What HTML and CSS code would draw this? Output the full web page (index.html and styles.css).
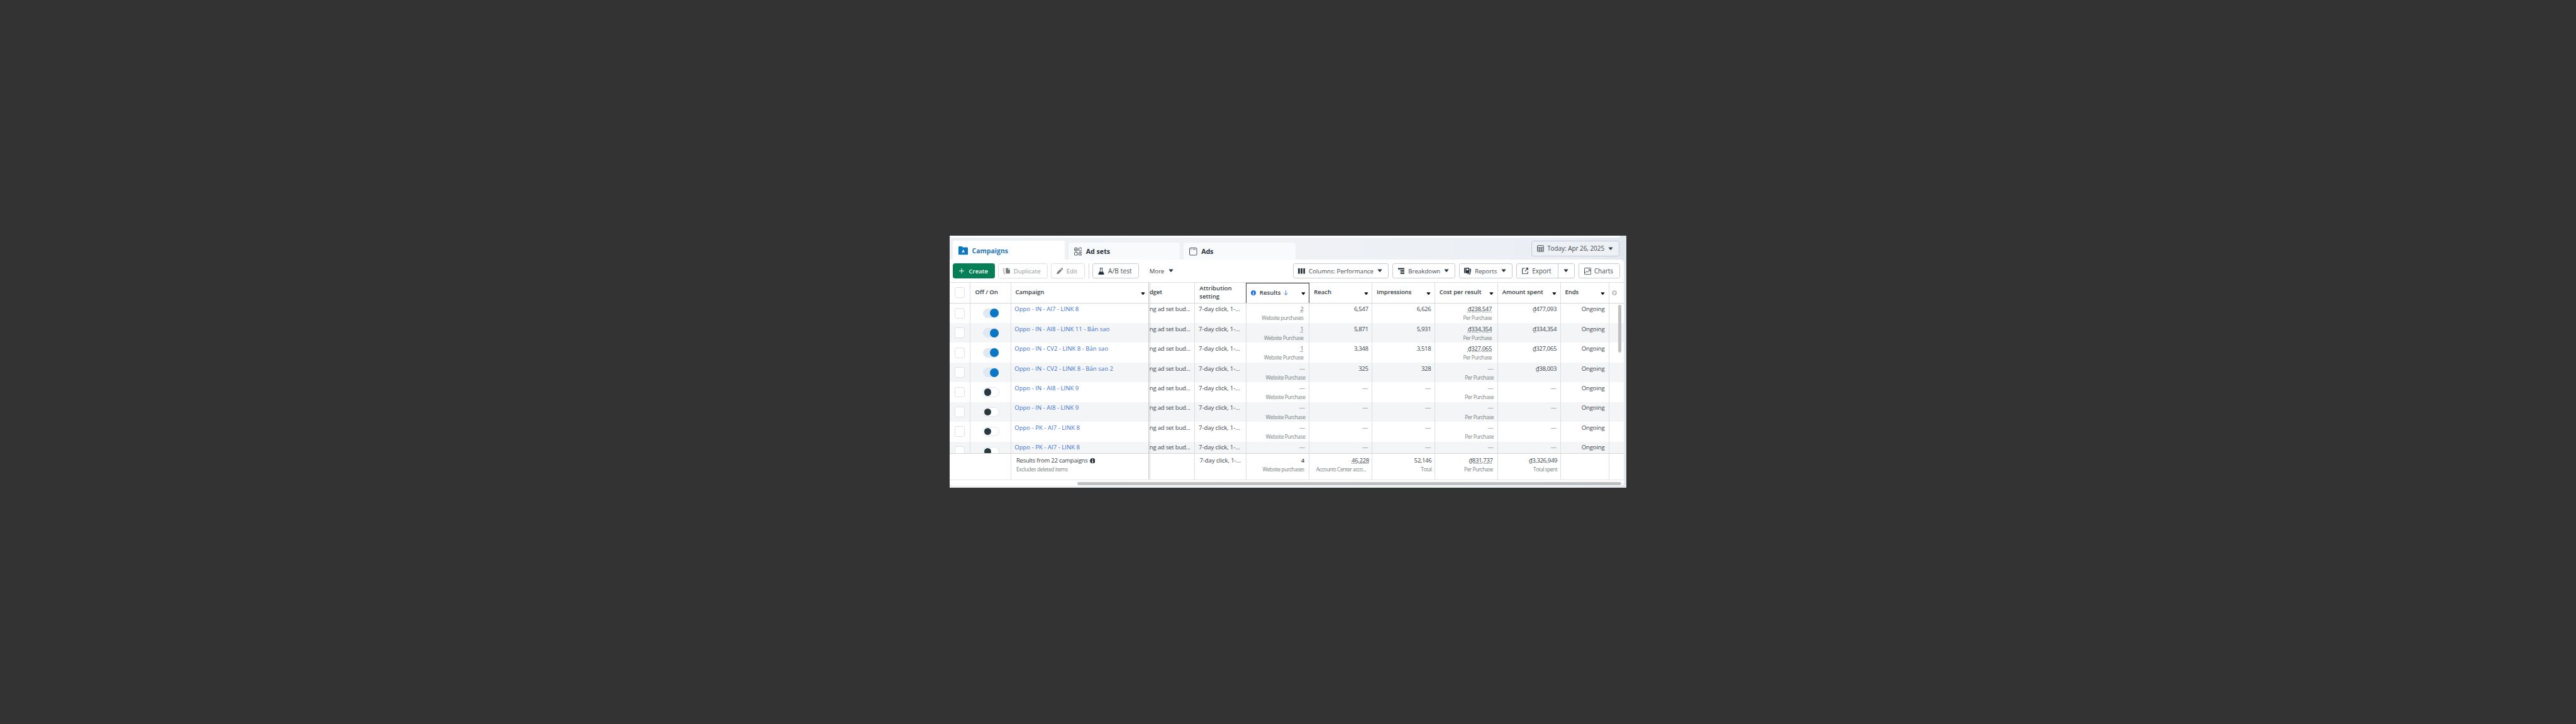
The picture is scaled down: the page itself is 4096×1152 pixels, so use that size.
FILE: index.html
```html
<!DOCTYPE html>
<html lang="en">
<head>
<meta charset="utf-8">
<title>Campaigns</title>
<link rel="stylesheet" href="styles.css">
</head>
<body>
<svg class="sprite" aria-hidden="true">
  <symbol id="caret" viewBox="0 0 10 7"><path d="M1.3.5h7.4q1.100 0 .4.900L5.700 5.700q-.7.800-1.400 0L.9 1.400Q.2.500 1.300.500z"/></symbol>
  <symbol id="folder" viewBox="0 0 19 17"><path d="M1.500 0h5q.8 0 1.200.7l.9 1.300h8.400q2 0 2 2v11q0 2-2 2H2q-2 0-2-2V1.500Q0 0 1.500 0z"/><path fill="#fff" d="M9.500 6l3.300 7-3.300-1.600L6.200 13z"/></symbol>
  <symbol id="grid" viewBox="0 0 16 16"><g fill="none" stroke="currentColor" stroke-width="1.200"><rect x=".7" y=".7" width="5.800" height="5.800" rx="1.200"/><rect x="9.300" y=".7" width="5.800" height="5.800" rx="1.200"/><rect x=".7" y="9.300" width="5.800" height="5.800" rx="1.200"/><rect x="9.300" y="9.300" width="5.800" height="5.800" rx="1.200"/></g><path d="M2.600 2.600h2v2h-2zM11.200 11.200h2v2h-2z"/></symbol>
  <symbol id="window" viewBox="0 0 16 16"><rect x=".7" y=".7" width="14.400" height="14.400" rx="1.800" fill="none" stroke="currentColor" stroke-width="1.200"/><path d="M3 3h1.400v1.400H3zM7 3.200h6v1H7z"/></symbol>
  <symbol id="plus" viewBox="0 0 10 10"><path d="M4.400 0h1.200v4.400H10v1.200H5.600V10H4.400V5.600H0V4.400h4.400z"/></symbol>
  <symbol id="copy" viewBox="0 0 14 13"><path d="M6.500 0H10v3.500h3.600V10q0 1.200-1.200 1.200H6.500Q5.300 11.200 5.300 10V1.200Q5.300 0 6.500 0zM10.800 0l2.800 2.700h-2.800z"/><path d="M3 .8Q.7 1 .9 3l.8 7q.2 1.800 2 2.100" fill="none" stroke="currentColor" stroke-width="1.200"/></symbol>
  <symbol id="pencil" viewBox="0 0 13 13"><path d="M0 13l.9-3.700 6.900-6.900 2.800 2.800-6.900 6.900zM8.600 1.600L9.700.5q.8-.8 1.600 0l1.200 1.200q.8.800 0 1.600l-1.100 1.100z"/></symbol>
  <symbol id="flask" viewBox="0 0 12 13"><path d="M3.300.6h5.400M4.300.8v4.400L1 11.200q-.4 1.200.8 1.200h8.400q1.200 0 .8-1.200L7.700 5.200V.8" fill="none" stroke="currentColor" stroke-width="1.100"/><path d="M3.300 7.200h5.400l2.500 4.300q.2 1-.8 1H1.600q-1 0-.8-1z"/></symbol>
  <symbol id="cols" viewBox="0 0 14 11"><path d="M0 0h3.600v11H0zM5.200 0h3.600v11H5.200zM10.400 0H14v11h-3.600z"/></symbol>
  <symbol id="tree" viewBox="0 0 13 12"><path d="M0 0h12.500v2.800H0zM4.800 4.400h7.700v2.800H4.800zM4.800 8.800h7.700v2.800H4.800zM2.800 2.800h1v7.800h1.500V9.600H3.800V6.300h1.500V5.300H3.800V2.800z"/></symbol>
  <symbol id="book" viewBox="0 0 14 14"><path d="M0 1.500Q0 0 1.300 0H2v11H1.300Q0 11 0 9.500zM2.800 0h6.500q1.200 0 1.200 1.200v8.600q0 1.200-1.200 1.200H2.800z"/><path fill="#fff" d="M4.500 2h4v3h-4z"/><path d="M11.500 1.800l2 .6q.5.200.4.900l-1.400 9.200q-.2 1-1.200.9L5 12l6.500-.4z"/></symbol>
  <symbol id="export" viewBox="0 0 13 13"><path d="M5.500 1.300H2.200Q.8 1.300.8 2.700v8q0 1.400 1.400 1.400h8q1.400 0 1.400-1.400V7.500M7.800.8h4.400v4.400M12 1L6 7" fill="none" stroke="currentColor" stroke-width="1.300"/></symbol>
  <symbol id="chart" viewBox="0 0 14 14"><rect x=".6" y=".6" width="12.800" height="12.800" rx="1.200" fill="none" stroke="currentColor" stroke-width="1.100"/><path d="M1.500 10.500l3.300-3.700 2.200 2 4.300-4.600M8.500 3.800h3v3" fill="none" stroke="currentColor" stroke-width="1.100"/></symbol>
  <symbol id="calendar" viewBox="0 0 14 14"><rect x=".6" y=".6" width="12.800" height="12.800" rx="2" fill="none" stroke="currentColor" stroke-width="1.100"/><path d="M.6 4.300h12.800M.6 7.400h12.800M.6 10.400h12.800M5 4.300v9M9.300 4.300v9" fill="none" stroke="currentColor"/></symbol>
  <symbol id="info" viewBox="0 0 10 10"><circle cx="5" cy="5" r="5"/><path fill="#fff" d="M4.300 1.800h1.500v1.400H4.300zM3.800 4h2v3.200h.6v.9H3.600v-.9h.7V4.900h-.5z"/></symbol>
  <symbol id="down" viewBox="0 0 9 10"><path d="M4.500 0v9M.8 5.500l3.700 3.700 3.700-3.700" fill="none" stroke="currentColor" stroke-width="1.200"/></symbol>
  <symbol id="add" viewBox="0 0 10 10"><circle cx="5" cy="5" r="5"/><path fill="#fff" d="M4.300 2.300h1.400v2h2v1.400h-2v2H4.300v-2h-2V4.300h2z"/></symbol>
</svg>

<main class="panel">
  <div class="topstrip"></div>
  <header class="tabs">
    <div class="tab active"><svg class="i-folder"><use href="#folder"/></svg><span>Campaigns</span></div>
    <div class="tab"><svg class="i-tab"><use href="#grid"/></svg><span>Ad sets</span></div>
    <div class="tab"><svg class="i-tab"><use href="#window"/></svg><span>Ads</span></div>
    <div class="btn date"><svg class="i14"><use href="#calendar"/></svg><span>Today: Apr 26, 2025</span><svg class="caret"><use href="#caret"/></svg></div>
  </header>

  <section class="content">
    <div class="toolbar">
      <div class="btn create"><svg class="i10"><use href="#plus"/></svg><span>Create</span></div>
      <div class="btn duplicate muted"><svg class="i14"><use href="#copy"/></svg><span>Duplicate</span></div>
      <div class="btn edit muted"><svg class="i13"><use href="#pencil"/></svg><span>Edit</span></div>
      <div class="sep"></div>
      <div class="btn ab"><svg class="i-flask"><use href="#flask"/></svg><span>A/B test</span></div>
      <div class="more"><span>More</span><svg class="caret"><use href="#caret"/></svg></div>
      <div class="btn columns"><svg class="i-cols"><use href="#cols"/></svg><span>Columns: Performance</span><svg class="caret"><use href="#caret"/></svg></div>
      <div class="btn breakdown"><svg class="i13"><use href="#tree"/></svg><span>Breakdown</span><svg class="caret"><use href="#caret"/></svg></div>
      <div class="btn reports"><svg class="i14"><use href="#book"/></svg><span>Reports</span><svg class="caret"><use href="#caret"/></svg></div>
      <div class="btn export"><svg class="i13"><use href="#export"/></svg><span>Export</span><div class="drop"><svg class="caret"><use href="#caret"/></svg></div></div>
      <div class="btn charts"><svg class="i14"><use href="#chart"/></svg><span>Charts</span></div>
    </div>

    <div class="table">
      <div class="row head">
        <div class="c check"><i class="box"></i></div>
        <div class="c onoff">Off / On</div>
        <div class="c name">Campaign<svg class="caret"><use href="#caret"/></svg></div>
        <div class="c budget">dget</div>
        <div class="c attr">Attribution<br>setting</div>
        <div class="c sorted"><svg class="i10 blue"><use href="#info"/></svg><span>Results</span><svg class="i-down"><use href="#down"/></svg><svg class="caret"><use href="#caret"/></svg></div>
        <div class="c">Reach<svg class="caret"><use href="#caret"/></svg></div>
        <div class="c">Impressions<svg class="caret"><use href="#caret"/></svg></div>
        <div class="c">Cost per result<svg class="caret"><use href="#caret"/></svg></div>
        <div class="c">Amount spent<svg class="caret"><use href="#caret"/></svg></div>
        <div class="c">Ends<svg class="caret"><use href="#caret"/></svg></div>
        <div class="c plus"><svg class="i10"><use href="#add"/></svg></div>
      </div>

      <div class="rows">
        <div class="row">
          <div class="c check"><i class="box"></i></div><div class="c switch"><i class="toggle on"></i></div>
          <div class="c name"><a>Oppo - IN - AI7 - LINK 8</a></div><div class="c budget">ng ad set bud...</div><div class="c attr">7-day click, 1-...</div>
          <div class="c num"><u class="soft">2</u><small class="web">Website purchases</small></div><div class="c num">6,547</div><div class="c num">6,626</div>
          <div class="c num"><u>₫238,547</u><small>Per Purchase</small></div><div class="c num">₫477,093</div><div class="c ends">Ongoing</div><div class="c"></div>
        </div>
        <div class="row">
          <div class="c check"><i class="box"></i></div><div class="c switch"><i class="toggle on"></i></div>
          <div class="c name"><a>Oppo - IN - AI8 - LINK 11 - Bản sao</a></div><div class="c budget">ng ad set bud...</div><div class="c attr">7-day click, 1-...</div>
          <div class="c num"><u class="soft">1</u><small class="web">Website Purchase</small></div><div class="c num">5,871</div><div class="c num">5,931</div>
          <div class="c num"><u>₫334,354</u><small>Per Purchase</small></div><div class="c num">₫334,354</div><div class="c ends">Ongoing</div><div class="c"></div>
        </div>
        <div class="row">
          <div class="c check"><i class="box"></i></div><div class="c switch"><i class="toggle on"></i></div>
          <div class="c name"><a>Oppo - IN - CV2 - LINK 8 - Bản sao</a></div><div class="c budget">ng ad set bud...</div><div class="c attr">7-day click, 1-...</div>
          <div class="c num"><u class="soft">1</u><small class="web">Website Purchase</small></div><div class="c num">3,348</div><div class="c num">3,518</div>
          <div class="c num"><u>₫327,065</u><small>Per Purchase</small></div><div class="c num">₫327,065</div><div class="c ends">Ongoing</div><div class="c"></div>
        </div>
        <div class="row">
          <div class="c check"><i class="box"></i></div><div class="c switch"><i class="toggle on"></i></div>
          <div class="c name"><a>Oppo - IN - CV2 - LINK 8 - Bản sao 2</a></div><div class="c budget">ng ad set bud...</div><div class="c attr">7-day click, 1-...</div>
          <div class="c num none"><b>—</b><small class="web">Website Purchase</small></div><div class="c num">325</div><div class="c num">328</div>
          <div class="c num none"><b>—</b><small>Per Purchase</small></div><div class="c num">₫38,003</div><div class="c ends">Ongoing</div><div class="c"></div>
        </div>
        <div class="row">
          <div class="c check"><i class="box"></i></div><div class="c switch"><i class="toggle"></i></div>
          <div class="c name"><a>Oppo - IN - AI8 - LINK 9</a></div><div class="c budget">ng ad set bud...</div><div class="c attr">7-day click, 1-...</div>
          <div class="c num none"><b>—</b><small class="web">Website Purchase</small></div><div class="c num"><b>—</b></div><div class="c num"><b>—</b></div>
          <div class="c num none"><b>—</b><small>Per Purchase</small></div><div class="c num"><b>—</b></div><div class="c ends">Ongoing</div><div class="c"></div>
        </div>
        <div class="row">
          <div class="c check"><i class="box"></i></div><div class="c switch"><i class="toggle"></i></div>
          <div class="c name"><a>Oppo - IN - AI8 - LINK 9</a></div><div class="c budget">ng ad set bud...</div><div class="c attr">7-day click, 1-...</div>
          <div class="c num none"><b>—</b><small class="web">Website Purchase</small></div><div class="c num"><b>—</b></div><div class="c num"><b>—</b></div>
          <div class="c num none"><b>—</b><small>Per Purchase</small></div><div class="c num"><b>—</b></div><div class="c ends">Ongoing</div><div class="c"></div>
        </div>
        <div class="row">
          <div class="c check"><i class="box"></i></div><div class="c switch"><i class="toggle"></i></div>
          <div class="c name"><a>Oppo - PK - AI7 - LINK 8</a></div><div class="c budget">ng ad set bud...</div><div class="c attr">7-day click, 1-...</div>
          <div class="c num none"><b>—</b><small class="web">Website Purchase</small></div><div class="c num"><b>—</b></div><div class="c num"><b>—</b></div>
          <div class="c num none"><b>—</b><small>Per Purchase</small></div><div class="c num"><b>—</b></div><div class="c ends">Ongoing</div><div class="c"></div>
        </div>
        <div class="row last">
          <div class="c check"><i class="box"></i></div><div class="c switch"><i class="toggle"></i></div>
          <div class="c name"><a>Oppo - PK - AI7 - LINK 8</a></div><div class="c budget">ng ad set bud...</div><div class="c attr">7-day click, 1-...</div>
          <div class="c num none"><b>—</b></div><div class="c num"><b>—</b></div><div class="c num"><b>—</b></div>
          <div class="c num none"><b>—</b></div><div class="c num"><b>—</b></div><div class="c ends">Ongoing</div><div class="c"></div>
        </div>
        <div class="vbar"></div>
      </div>

      <div class="row foot">
        <div class="c wide"></div>
        <div class="c name"><span class="sum">Results from 22 campaigns<svg class="i-sum"><use href="#info"/></svg></span><small class="ex">Excludes deleted items</small></div>
        <div class="c budget"></div>
        <div class="c attr">7-day click, 1-...</div>
        <div class="c num total"><span>4</span><small class="web">Website purchases</small></div>
        <div class="c num reach"><u>46,228</u><small>Accounts Center acco...</small></div>
        <div class="c num">52,146<small>Total</small></div>
        <div class="c num cost"><u>₫831,737</u><small>Per Purchase</small></div>
        <div class="c num spent">₫3,326,949<small>Total spent</small></div>
        <div class="c"></div>
        <div class="c"></div>
      </div>
      <div class="hscroll"><div class="hbar"></div></div>
    </div>
  </section>
</main>
</body>
</html>
```
FILE: styles.css
```css
html { font-size: 8px; }
* { box-sizing: border-box; }
body {
  margin: 0;
  width: 100vw;
  height: 100vh;
  overflow: hidden;
  background: #333;
  padding: 46.9rem 0 0 188.8rem;
  font: 1.2rem "Open Sans", "Noto Sans", sans-serif;
  color: #3c464d;
  white-space: nowrap;
}
svg { display: block; flex: none; fill: currentColor; }
.sprite { position: absolute; width: 0; height: 0; }

.panel {
  width: 134.4rem;
  height: 50.1rem;
  overflow: hidden;
  background: linear-gradient(90deg, #eef1f4, #eff1f5 50%, #ebeff5 90%, #e2e8f0);
}
.topstrip { width: 133.2rem; height: .35rem; background: #fff; border-radius: 0 0 .4rem .4rem; }

/* Tabs */
.tabs { display: flex; align-items: flex-end; height: 4.42rem; padding-left: .6rem; }
.tab {
  display: flex;
  align-items: center;
  gap: .8rem;
  width: 22.2rem;
  height: 3.4rem;
  margin-right: .75rem;
  padding: .1rem 0 0 1.1rem;
  background: #f8fafc;
  border-radius: .5rem .5rem 0 0;
  font-size: 1.33rem;
  font-weight: 700;
  color: #283238;
}
.tab.active { height: 3.77rem; padding-top: .2rem; background: #fff; color: #1f74b9; font-weight: 700; font-size: 1.31rem; }
.tab:nth-child(3) span { letter-spacing: -.03rem; }
.i-folder { width: 1.9rem; height: 1.7rem; color: #0a78be; }
.i-tab { width: 1.6rem; height: 1.6rem; color: #333b41; }
.date { align-self: flex-start; width: 17.5rem; margin: .65rem 0 0 46.15rem; padding: 0 1.15rem 0 .95rem; background: #edf0f5; }

/* Buttons */
.content { width: 133.9rem; height: 45rem; background: #fff; border-radius: 0 .6rem .6rem .8rem; overflow: hidden; }
.toolbar { display: flex; align-items: center; height: 4.45rem; padding-left: .6rem; }
.btn {
  display: flex;
  align-items: center;
  flex: none;
  height: 3.07rem;
  border: 1px solid #c5cbd1;
  border-radius: .4rem;
  font-size: 1.21rem;
  font-weight: 500;
  color: #3f4a52;
}
.btn svg, .more svg { color: #25313a; }
.btn .caret, .more .caret { width: 1rem; height: .7rem; margin-left: auto; }
.btn.muted { color: #8d9397; border-color: #dcdfe2; }
.btn.muted svg { color: #777c80; }
.i10 { width: 1rem; height: 1rem; }
.i13 { width: 1.3rem; height: 1.3rem; }
.i14 { width: 1.4rem; height: 1.4rem; }
.i-flask { width: 1.25rem; height: 1.4rem; }
.i-cols { width: 1.4rem; height: 1.1rem; }
.date span { margin-left: .65rem; font-size: 1.235rem; }
.date svg { color: #3a454d; }
.create { width: 8.3rem; padding-left: 1.1rem; gap: .95rem; background: #067f57; border-color: #067f57; color: #fff; font-weight: 600; font-size: 1.19rem; }
.btn.create svg { color: #fff; }
.duplicate { width: 9.8rem; margin-left: .7rem; padding-left: .9rem; gap: .65rem; }
.edit { width: 6.77rem; margin-left: .7rem; padding-left: .95rem; gap: .7rem; }
.sep { width: 1px; height: 3.07rem; margin-left: .7rem; background: #d5d9dd; }
.ab { width: 9.27rem; margin-left: .6rem; padding-left: 1rem; gap: .8rem; font-size: 1.26rem; letter-spacing: .01em; }
.more { display: flex; align-items: center; width: 4.75rem; margin-left: 2.1rem; font-weight: 500; font-size: 1.19rem; }
.columns { width: 19.03rem; margin-left: 23.8rem; padding: 0 1.15rem 0 .9rem; gap: .7rem; }
.breakdown { width: 12.57rem; margin-left: .7rem; padding: 0 1.15rem 0 1rem; gap: .75rem; }
.reports { width: 10.64rem; margin-left: .67rem; padding: 0 1.1rem 0 .95rem; gap: .7rem; }
.export { width: 11.67rem; margin-left: .76rem; padding-left: 1rem; gap: .75rem; font-size: 1.24rem; }
.drop { display: flex; align-items: center; width: 3.33rem; height: 100%; margin-left: auto; padding-right: 1.15rem; border-left: 1px solid #c5cbd1; }
.charts { width: 8.2rem; margin-left: .7rem; padding-left: .95rem; gap: .65rem; font-size: 1.235rem; }
.columns span, .breakdown span { letter-spacing: -.003em; }

/* Table */
.row {
  display: grid;
  grid-template-columns: 4.07rem 8.1rem 27.4rem 9.1rem 10.34rem 12.5rem 12.46rem 12.47rem 12.5rem 12.47rem 9.66rem 1fr;
  height: 3.93rem;
}
.c { min-width: 0; border-right: 1px solid #dcdee0; padding: .46rem .8rem 0 .8rem; line-height: 1.6rem; overflow: hidden; }
.row .c:last-child { border-right: 0; }
.row .c.name { border-right-color: #cfd1d4; }
.row .budget { background: linear-gradient(90deg, rgba(0, 0, 0, .1), transparent .5rem); }
.head { height: 4.2rem; border-top: 1px solid #dadddf; border-bottom: 1px solid #d5d8da; font-weight: 600; color: #353d43; }
.head .c { display: flex; align-items: center; padding: 0 .7rem 0 .85rem; letter-spacing: -.008em; }
.head .caret { width: .85rem; height: .6rem; margin: .3rem 0 0 auto; color: #0b0d0f; }
.head .check { padding-left: .9rem; }
.head .onoff { padding-left: .95rem; }
.head .budget { padding-left: .1rem; }
.head .attr { padding-left: .95rem; letter-spacing: 0; }
.head .sorted { border: 1px solid #34393d; border-bottom: 0; margin-left: -1px; }
.head .sorted span { margin: 0 .6rem 0 .7rem; letter-spacing: 0; }
.head .sorted .blue { color: #1d72e8; }
.head .plus { color: #c3c6c9; padding: 0; justify-content: center; padding-right: .9rem; }
.i-down { width: .9rem; height: 1rem; color: #3c7fe8; }

.rows { position: relative; height: 29.83rem; overflow: hidden; }
.rows .row:nth-child(even) { background: #f3f5f7; }
.row .check { padding: 0 0 0 .9rem; display: flex; align-items: center; }
.box { width: 2.1rem; height: 2.1rem; border: 1px solid #dee0e2; border-radius: .4rem; background: #fff; }
.switch { display: flex; align-items: center; padding: 0 0 0 2.45rem; }
.toggle { display: flex; align-items: center; width: 3.25rem; height: 1.9rem; border: 1px solid #e3e5e8; border-radius: 1rem; background: #fff; padding-left: .15rem; }
.toggle::before { content: ""; width: 1.4rem; height: 1.4rem; border-radius: 50%; background: #283943; }
.toggle.on { background: #dfe9f3; padding-left: 1.3rem; }
.toggle.on::before { width: 1.75rem; height: 1.75rem; flex: none; background: #0a76c4; }
.rows .name { padding-left: .68rem; color: #3f76cf; }
.budget { letter-spacing: -.022em; }
.rows .budget { padding: .46rem 0 0 .1rem; }
.attr { letter-spacing: -.011em; }
.num { text-align: right; letter-spacing: -.038em; padding-right: .7rem; }
.row .num:nth-child(6) { padding-right: 1.1rem; }
.row .num:nth-child(9) { padding-right: 1.1rem; }
.row .num.none { padding-right: .75rem; }
.num b { font-weight: 400; letter-spacing: 0; color: #6b7378; }
.ends { text-align: right; letter-spacing: -.015em; padding-right: .8rem; }
small { display: block; margin-top: .17rem; font-size: 1.05rem; line-height: 1.4rem; letter-spacing: -.058em; color: #797f83; }
small.web { letter-spacing: -.05em; }
u { text-decoration: underline dotted #5d666c 1px; text-underline-offset: .15rem; }
u.soft { color: #6d767c; }
.vbar { position: absolute; right: .45rem; top: .37rem; width: .6rem; height: 9.5rem; border-radius: .3rem; background: #bfc1c3; }

.foot { grid-template-columns: 12.17rem 27.4rem 9.1rem 10.34rem 12.5rem 12.46rem 12.47rem 12.5rem 12.47rem 9.66rem 1fr; height: 5.38rem; border-top: 1px solid #d2d4d6; border-bottom: 1px solid #e5e7e9; }
.foot .c { padding-top: .55rem; }
.foot .name { padding-left: 1.02rem; letter-spacing: -.029em; }
.sum { display: flex; align-items: center; gap: .4rem; }
.i-sum { width: 1.07rem; height: 1.07rem; color: #27323a; }
small.ex { letter-spacing: -.042em; margin-top: .15rem; }
.foot .attr { padding-left: .97rem; }
.foot .total { padding-right: .94rem; }
.foot .total span { font-weight: 600; }
.foot .num:nth-child(6) { padding-right: .54rem; }
.foot .reach small { padding-right: .6rem; }
.foot .num:nth-child(7) { padding-right: .57rem; }
.foot .cost { padding-right: .9rem; }
.foot .num:nth-child(9) { padding-right: .55rem; }
.hscroll { height: 1.2rem; padding: .3rem .43rem 0 25.3rem; }
.hbar { height: .63rem; border-radius: .3rem; background: #bfc1c2; }
```
